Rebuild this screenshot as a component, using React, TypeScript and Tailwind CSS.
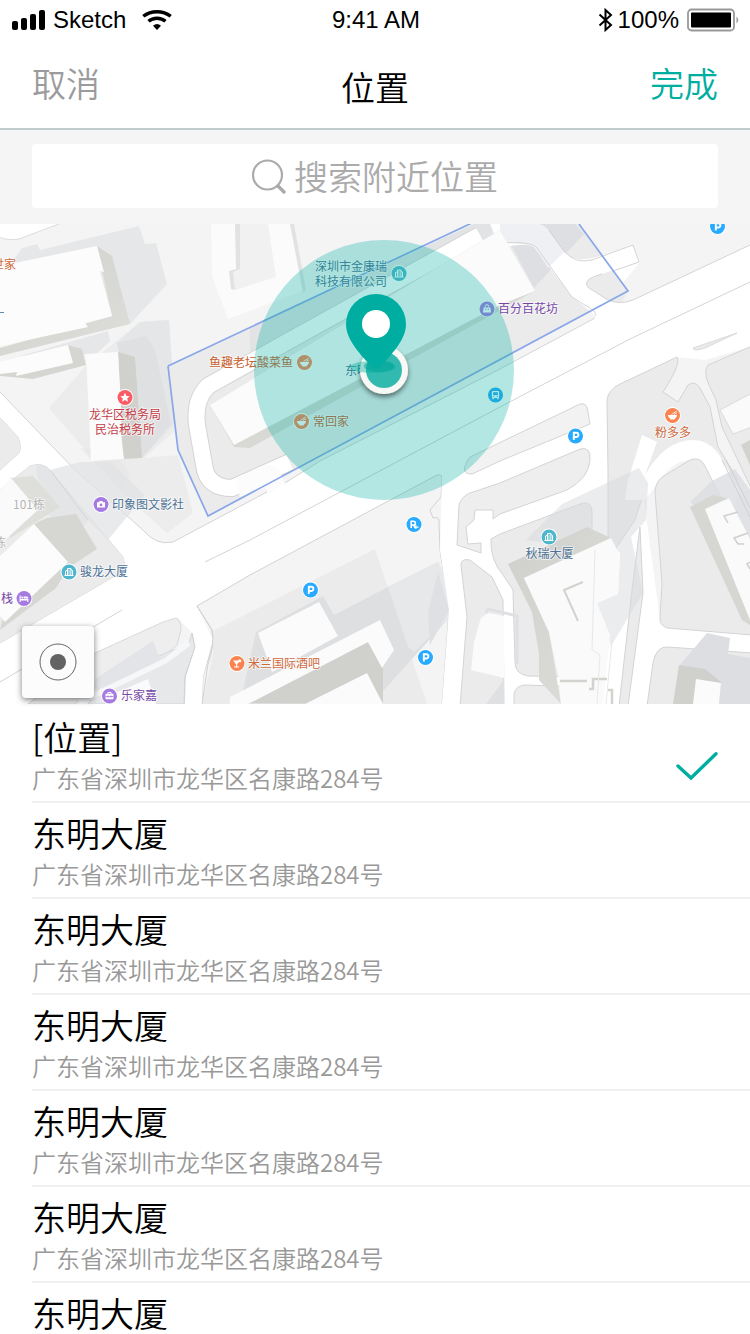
import React from "react";

type PoiKind = "building" | "food" | "bag" | "bus" | "park" | "parkExit" | "star" | "camera" | "bed" | "drink" | "gift";

const kindColor: Record<PoiKind, string> = {
  building: "#50b6cd",
  food: "#fb8350",
  bag: "#a67be0",
  bus: "#27a9f5",
  park: "#27aaff",
  parkExit: "#27aaff",
  star: "#f95c64",
  camera: "#a67be0",
  bed: "#a67be0",
  drink: "#fb8350",
  gift: "#a67be0",
};

function Glyph({ kind }: { kind: PoiKind }) {
  switch (kind) {
    case "building":
      return (
        <g fill="none" stroke="#fff" strokeWidth="1">
          <path d="M-4.5 3.5h9M-3.5 3.5V-1l2-.8M-1.5 3.5V-3.5h3.4v7M3.5 3.5V-1.5l-1.6-1" />
          <path d="M0 -2.5v5.5" strokeOpacity=".8" />
        </g>
      );
    case "food":
      return (
        <g fill="#fff">
          <path d="M-4.6 -.6h9.2a4.6 4.4 0 0 1-2.4 3.8v.8h-4.4v-.8a4.6 4.4 0 0 1-2.4-3.8z" />
          <path d="M-1 -1 4-4.4M1.4-1 4.6-2.8" stroke="#fff" strokeWidth=".9" />
        </g>
      );
    case "bag":
      return (
        <g>
          <path d="M-3.4 -1.6h6.8l.6 5.2h-8z" fill="#fff" />
          <path d="M-1.7 -1.6v-1a1.7 1.7 0 0 1 3.4 0v1" fill="none" stroke="#fff" strokeWidth="1" />
          <circle cx="-1.3" cy=".4" r=".6" fill="#a67be0" />
          <circle cx="1.3" cy=".4" r=".6" fill="#a67be0" />
        </g>
      );
    case "bus":
      return (
        <g>
          <rect x="-3.6" y="-4" width="7.2" height="7" rx="1.2" fill="#fff" />
          <rect x="-2.4" y="-2.8" width="4.8" height="3" fill="#27a9f5" />
          <path d="M-2.4 2.6v1.6M2.4 2.6v1.6" stroke="#fff" strokeWidth="1.4" />
          <circle cx="-1.9" cy="1.5" r=".6" fill="#27a9f5" />
          <circle cx="1.9" cy="1.5" r=".6" fill="#27a9f5" />
        </g>
      );
    case "park":
      return <path d="M-1.7 4V-3.2H.8a2.1 2.1 0 0 1 0 4.2H-1.7" fill="none" stroke="#fff" strokeWidth="1.9" />;
    case "parkExit":
      return (
        <g fill="none" stroke="#fff" strokeWidth="1.6">
          <path d="M-2.8 3.6V-3.2H-.5a1.8 1.8 0 0 1 0 3.7H-2.8M-.6 .6 1 2.4" />
          <path d="M.6 2.6h4M2.4 .8.6 2.6l1.8 1.6" strokeWidth="1.2" />
        </g>
      );
    case "star":
      return <path d="M0-4.8 1.4-1.6 4.8-1.3 2.2.9 3 4.3 0 2.5-3 4.3-2.2.9-4.8-1.3-1.4-1.6z" fill="#fff" />;
    case "camera":
      return (
        <g>
          <path d="M-4-2.2h2l.7-1.2h2.6l.7 1.2h2v5.2h-8z" fill="#fff" />
          <circle cy=".4" r="1.4" fill="#a67be0" />
        </g>
      );
    case "bed":
      return (
        <g fill="#fff">
          <path d="M-4.4-3h1.1v3.6h7.7v2.8H3.3V2h-6.6v1.4h-1.1z" />
          <circle cx="-1.8" cy="-1" r="1" />
          <path d="M-.4-2h3.2a1.6 1.6 0 0 1 1.6 1.6v.4H-.4z" />
        </g>
      );
    case "drink":
      return (
        <g fill="#fff">
          <path d="M-4-3h7L.2.7v2.4h1.9v1h-5v-1h1.9V.7z" />
          <circle cx="2.8" cy="-2.8" r="1.5" />
        </g>
      );
    case "gift":
      return (
        <g>
          <rect x="-4" y="-2.2" width="8" height="5.4" rx=".8" fill="#fff" />
          <path d="M-1.6-2.2v-1.3h3.2v1.3" fill="none" stroke="#fff" strokeWidth="1" />
          <path d="M-4 .5h8M-1.5-.6v2.4M1.5-.6v2.4" stroke="#a67be0" strokeWidth=".8" />
        </g>
      );
  }
}

function Poi({ x, y, kind }: { x: number; y: number; kind: PoiKind }) {
  return (
    <g transform={`translate(${x} ${y})`}>
      <circle r="8.4" fill="#fff" />
      <circle r="7.5" fill={kindColor[kind]} />
      <Glyph kind={kind} />
    </g>
  );
}

const pois: { x: number; y: number; kind: PoiKind }[] = [
  { x: 399, y: 273.5, kind: "building" },
  { x: 304.5, y: 362.5, kind: "food" },
  { x: 301.5, y: 421.5, kind: "food" },
  { x: 487, y: 309, kind: "bag" },
  { x: 495.5, y: 395, kind: "bus" },
  { x: 717.5, y: 226.5, kind: "park" },
  { x: 575.5, y: 436, kind: "park" },
  { x: 310.5, y: 590, kind: "park" },
  { x: 425.5, y: 657.5, kind: "park" },
  { x: 414, y: 524.5, kind: "parkExit" },
  { x: 125, y: 397.5, kind: "star" },
  { x: 672.5, y: 415.5, kind: "food" },
  { x: 101, y: 504.5, kind: "camera" },
  { x: 69, y: 572, kind: "building" },
  { x: 24, y: 598.5, kind: "bed" },
  { x: 549, y: 537, kind: "building" },
  { x: 237, y: 663.5, kind: "drink" },
  { x: 109.5, y: 696, kind: "gift" },
];

const labels: { x: number; y: number; text: string; color: string; anchor?: "middle" | "end" }[] = [
  { x: 16, y: 269, text: "世家", color: "#cf6a3c", anchor: "end" },
  { x: 351, y: 271, text: "深圳市金康瑞", color: "#4d7295", anchor: "middle" },
  { x: 351, y: 286, text: "科技有限公司", color: "#4d7295", anchor: "middle" },
  { x: 293, y: 367, text: "鱼趣老坛酸菜鱼", color: "#c9602f", anchor: "end" },
  { x: 313, y: 426, text: "常回家", color: "#c9602f" },
  { x: 345, y: 375, text: "东明大厦", color: "#4d7295" },
  { x: 498, y: 313, text: "百分百花坊", color: "#7747a8" },
  { x: 125, y: 419, text: "龙华区税务局", color: "#c43c48", anchor: "middle" },
  { x: 125, y: 434, text: "民治税务所", color: "#c43c48", anchor: "middle" },
  { x: 673, y: 437, text: "粉多多", color: "#cf6a3c", anchor: "middle" },
  { x: 112, y: 509, text: "印象图文影社", color: "#4d7295" },
  { x: 80, y: 576, text: "骏龙大厦", color: "#4d7295" },
  { x: 13, y: 603, text: "栈", color: "#7747a8", anchor: "end" },
  { x: 549.5, y: 558, text: "秋瑞大厦", color: "#4d7295", anchor: "middle" },
  { x: 248, y: 668, text: "米兰国际酒吧", color: "#cf6a3c" },
  { x: 121, y: 700, text: "乐家嘉", color: "#7747a8" },
  { x: 13, y: 509, text: "101栋", color: "#b5b5b5" },
  { x: 6, y: 547, text: "栋", color: "#b5b5b5", anchor: "end" },
];

function StreetMap() {
  return (
    <svg
      className="block h-full w-full"
      viewBox="0 224 750 480"
      preserveAspectRatio="xMidYMid slice"
      role="img"
      aria-label="地图"
    >
      <defs>
        <linearGradient id="wall" x1="0" y1="0" x2="1" y2="1">
          <stop offset="0" stopColor="#cfcfcb" />
          <stop offset="1" stopColor="#dededb" />
        </linearGradient>
        <filter id="pinShadow" x="-50%" y="-50%" width="200%" height="200%">
          <feDropShadow dx="0" dy="3" stdDeviation="2.5" floodColor="#000" floodOpacity=".5" />
        </filter>
      </defs>
      <rect x="0" y="224" width="750" height="480" fill="#f4f4f4" />

      {/* north-west corner road */}
      <path d="M-2 222H64L19 239Q10 241 -2 237z" fill="#fff" stroke="#d4d4d4" strokeWidth=".8" />

      {/* shadows cast by the north-west buildings */}
      <path d="M12 262 22 248 37 244 40 250 139 226 145 244 156 243 167 284 130 324 100 300z" fill="#e6e7e9" />
      <path d="M20 356 108 331 110 341 96 354z" fill="#e6e7e9" />
      <path d="M49 408 86 366 140 322 169 320 174 396 176 430 142 460 120 490z" fill="#ececec" />
      <path d="M117 343 140 322 169 320 174 396 180 398 178 420 142 458z" fill="#e5e6e7" />
      <path d="M117 343 146 336 155 350 171 424 142 458z" fill="#dfe0e1" />

      {/* walled estate */}
      <path d="M168 366 474 224H579L628 291 208 516 178 450z" fill="#ebebeb" />
      <path d="M250 328 474 224H548L480 242 250 360z" fill="#e2e3e5" />
      <path d="M500 224H575L584 234 534 288z" fill="#dedfe2" />

      {/* small street inside the estate */}
      <path d="M500 248Q525 242 534 247L572 297 596 316 640 262 632 245 600 256Q575 264 564 252L549 232Q545 224 535 224H490z" fill="#fff" />
      <path d="M500 224H535Q546 225 549 232L564 252 548 268 536 249Q532 243 500 243z" fill="#eff0f3" />
      <path d="M500 243Q532 241 537 248L572 297 583 304Q598 311 596 318M549 230 564 251Q575 264 592 260L633 245 639 262 602 275" fill="none" stroke="#d4d4d4" strokeWidth="1" />

      {/* main avenue */}
      <path
        d="M750 245 633 300Q620 305 608 300L594 318 500 369 320 461 285 483 267 492 173 542Q156 546 143 530L75 470 0 392V418L18 437Q22 446 19 453L0 470V490L30 466Q43 462 50 470L123 557Q128 569 113 577L0 643V704H30L95 653 178 618 192 633 213 640 197 606 250 575 442 475 500 445 590 453 608 400Q608 390 620 384L677 357 705 360 750 347z"
        fill="#fff"
      />
      <path d="M602 274Q580 280 589 288L608 300Q616 303 622 302L628 291 612 271z" fill="#ebebeb" />
      <path
        d="M750 245 633 300Q620 305 608 300L589 288Q580 280 602 274M595 318 500 369 320 461 285 483M267 492 173 542Q156 546 143 530L75 470 0 392M0 418 18 437Q22 446 19 453L0 470M0 490 30 466Q43 462 50 470L123 557Q128 569 113 577L0 643M750 282 630 339 500 407 250 540 205 562M122 610 0 682"
        fill="none"
        stroke="#d4d4d4"
        strokeWidth="1"
      />
      <path d="M0 418 18 437Q22 446 19 453L0 470zM0 490 30 466Q43 462 50 470L123 557Q128 569 113 577L0 643z" fill="#ebebeb" />
      <path d="M80 448 118 450 165 505 167 533 130 500z" fill="#e6e6e6" opacity=".6" />
      <path d="M120 460 178 455 193 513 167 533z" fill="#ececec" />
      <path d="M36 466Q44 462 50 470L80 462 111 462 145 495 108 540 88 520 76 535 42 510z" fill="#e2e3e6" opacity=".75" />
      <path d="M50 470 88 520" fill="none" stroke="#d4d4d4" strokeWidth="1" />
      <path d="M693 348 737 333 705 348Q694 352 693 348z" fill="#eaeaea" stroke="#d4d4d4" strokeWidth=".8" />

      {/* looping lane in the estate */}
      <g fill="none">
        <path d="M480 235 285 343 208 386Q194 400 197 425L205 470Q210 488 232 488L290 462" stroke="#d4d4d4" strokeWidth="18" />
        <path d="M480 235 285 343 208 386Q194 400 197 425L205 470Q210 488 232 488L290 462" stroke="#fff" strokeWidth="16" />
      </g>
      <path d="M235 479 250 472 267 464 278 468 285 484 268 494 266 488 240 497z" fill="#fcfcfc" />

      {/* long block in the estate */}
      <path d="M210 405 282 361 500 230 535 291 250 448 234 447z" fill="#d8d8d5" />
      <path d="M210 405 282 361 500 230 535 291 500 305 234 445z" fill="#fbfbfb" />
      <path d="M168 366 474 222M579 224 628 291 208 516 178 450 168 366" fill="none" stroke="#89a6e9" strokeWidth="1.7" />

      {/* north buildings */}
      <path d="M211 224H291L305 290 228 319 212 276z" fill="#fbfbfb" />
      <path d="M237 224H268L276 277 235 290 230 271 237 269z" fill="#f1f1f1" />
      <path d="M235 224H240V269L233 272 235 290 231 289 229 271 236 269zM290 224H294L306 290 303 293z" fill="#e1e2e4" />

      {/* north-west buildings */}
      <path d="M0 348 112 316 97 246 112 256 130 324 0 356z" fill="url(#wall)" />
      <path d="M0 266 97 246 104 272 100 271 112 316 85 323 88 327 0 346z" fill="#fcfcfc" />
      <path d="M0 372 68 345 82 349 86 365 33 379 0 376z" fill="#d5d5d2" />
      <path d="M0 362 68 345 73 363 16 376 17 372 0 374z" fill="#fcfcfc" />
      <path d="M118 352 135 357 142 458 123 459z" fill="#d0d0cd" />
      <path d="M86 354 118 352 121 405 121 436 124 459 91 461z" fill="#fbfbfb" />

      {/* west buildings */}
      <path d="M10 478 33 476 60 507 10 538z" fill="#dededb" />
      <path d="M0 490 11 478 38 510 5 540 0 534z" fill="#fafafa" />
      <path d="M34 524 47 518 76 514 97 549 68 568 56 588 0 630 10 590z" fill="#d6d6d3" />
      <path d="M0 556 34 524 68 562 5 622 0 616z" fill="#fcfcfc" />

      {/* southern blocks */}
      <path d="M197 606 250 575 437 475Q443 474 442 480L441 497 430 510 433 518Q440 516 439 523L440 550 449 610 442 706H202L203 677 213 643 212 630z" fill="#f4f4f4" stroke="#d2d2d2" strokeWidth="1" />
      <path d="M213 631 375 549 427 704H202L213 655z" fill="#ebebeb" />
      <path d="M256 632 323 596 334 615 388 587 438 562 453 595 449 618 384 690 350 704H240z" fill="#dddfe1" />
      <path d="M388 587 438 562 453 595 449 618 414 652 408 647z" fill="#e7e8ea" />
      <path d="M428 612 438 572 449 610 430 645z" fill="#dfe0e3" />
      <path d="M258 633 319 602 338 636 272 672z" fill="#fbfbfb" />
      <path d="M250 703 368 642 383 668V704z" fill="#d0d0cd" />
      <path d="M230 697 380 620 394 650 382 668 368 642 248 704H230z" fill="#fbfbfb" />
      <path d="M305 704 367 673 383 704z" fill="#fbfbfb" />

      {/* lane by the parking lot */}
      <path d="M28 704 95 653 163 622 176 618Q181 620 181 630L177 645 165 655 100 683 75 704z" fill="#eeeeee" stroke="#d2d2d2" strokeWidth=".8" />
      <path d="M88 704 104 680 168 652 188 645 192 633 195 647 185 677V704z" fill="#e7e8ea" stroke="#d2d2d2" strokeWidth=".8" />
      <path d="M95 679 153 641 162 666 94 690z" fill="#e3e4e7" />
      <path d="M78 700 165 658 188 639 190 646 167 663 95 698 80 704z" fill="#f6f7f9" />
      <path d="M113 694 148 679 156 704H110z" fill="#fbfbfb" />
      <path d="M192 630 213 638 203 677 202 704H185L186 677 195 647z" fill="#fff" />
      <path d="M197 606 212 630Q215 645 208 664L202 704M192 633 195 647 185 677 184 704" fill="none" stroke="#d2d2d2" strokeWidth="1" />

      {/* north-south street and its islands */}
      <path d="M442 475 500 445 610 400 640 470 660 620 750 630V658L660 650 647 704H442L449 610 440 550z" fill="#fff" />
      <path d="M470 457 580 404Q587 402 588 412L590 424 500 461 472 474Q458 474 470 457z" fill="#f2f2f2" stroke="#d4d4d4" strokeWidth="1" />
      <path d="M457 545 459 505Q461 497 470 493L500 483 580 449Q591 446 590 460 589 478 567 490L500 514 493 519V510H475L474 520 466 527 468 544 481 543V553z" fill="#eeeeee" stroke="#d4d4d4" strokeWidth="1" />
      <path d="M500 534 583 503Q592 502 592 512V640Q592 672 577 677L528 676Q515 674 515 662L513 590 503 575Q490 560 491 539z" fill="#ebebeb" stroke="#d4d4d4" strokeWidth="1" />
      <path d="M461 565Q461 558 470 560L492 577 503 600 504 706H460L467 617z" fill="#ebebeb" stroke="#d4d4d4" strokeWidth="1" />
      <path d="M514 706V694Q516 685 526 685L580 687Q588 690 587 706z" fill="#ededed" stroke="#d4d4d4" strokeWidth="1" />
      <path d="M608 470 607 400Q608 390 620 384L677 357 678 362Q676 372 663 392L678 402 688 385Q695 380 700 388L710 407 718 447 738 480 720 470 705 450Q694 446 690 446L668 456 648 480 635 520 608 560z" fill="#ebebeb" stroke="#d4d4d4" strokeWidth="1" />
      <path d="M628 480 642 435 657 442 645 475Q665 440 693 440 708 440 718 453L740 490 730 510 698 462Q680 455 662 477L645 500 625 500z" fill="#fff" />
      <path d="M709 385 716 400 722 427 752 490V346L708 365Q703 372 709 385z" fill="#ebebeb" stroke="#d4d4d4" strokeWidth="1" />
      <path d="M720 410 752 393V427L733 434z" fill="#fafafa" stroke="#d4d4d4" strokeWidth=".8" />
      <path d="M741 445 750 440V465z" fill="#d2d2cf" />
      <path d="M655 492Q656 480 664 476L690 460Q700 456 705 466L752 560V635L667 628Q659 625 660 617L662 584z" fill="#ebebeb" stroke="#d4d4d4" strokeWidth="1" />
      <path d="M653 663Q656 646 668 647L752 653V706H647z" fill="#ebebeb" stroke="#d4d4d4" strokeWidth="1" />
      <path d="M640 527 643 593 628 706H619L632 590z" fill="#ebebeb" stroke="#d4d4d4" strokeWidth="1" />

      {/* south-east shadows */}
      <path d="M526 540 562 504 639 468 648 483 646 520 631 537 643 593 611 646 597 603 618 594 620 552z" fill="#d8d9de" opacity=".5" />
      <path d="M690 502 712 481 735 469 750 490V545z" fill="#dcdde1" opacity=".8" />
      <path d="M680 665 707 633 730 638 728 654 750 658V704H690z" fill="#dcdee1" />
      <path d="M486 704 504 680V704z" fill="#dfe0e2" />
      <path d="M471 670 474 642 481 618 488 613 504 616V678z" fill="#fbfbfb" />
      <path d="M486 613 488 609 517 616V664" fill="none" stroke="#dfe0e3" strokeWidth="3" />

      {/* tower in the south east */}
      <path d="M508 564 587 527 611 538 524 578 549 632 561 704 539 680V654L532 612z" fill="url(#wall)" />
      <path d="M524 578 611 538 620 555 618 594 597 603 610 635 603 704H561L558 675 549 632z" fill="#fafafa" />
      <path d="M578 621 564 590 583 582" fill="none" stroke="#d2d2cf" strokeWidth="2" />
      <path d="M560 681H587M589 689H593V679H607M608 690H612V704" fill="none" stroke="#d2d2cf" strokeWidth="2.5" />
      <path d="M595 550 592 650 600 655 597 704M612 640 606 704" fill="none" stroke="#e8e8e8" strokeWidth="1" />

      {/* slanted building on the east edge */}
      <path d="M690 507 713 495 730 499 750 600V625L742 620z" fill="#d6d6d3" />
      <path d="M705 509 729 498 750 539V620z" fill="#fafafa" />
      <path d="M738 512 724 516 728 523M748 533 734 538 738 544H744M750 562 747 564 750 569" fill="none" stroke="#cfcfcc" strokeWidth="1.5" />
      <path d="M722 460 750 517M726 460 750 508" fill="none" stroke="#d0d0d0" strokeWidth="1" />
      <path d="M679 665 705 669 721 682 719 704H673z" fill="#d0d0cd" />
      <path d="M696 679 721 683 719 704H693z" fill="#fbfbfb" />
      <path d="M0 312.500H4" stroke="#5b8db5" strokeWidth="1" />

      {/* place names */}
      <g
        fontFamily="'Noto Sans CJK SC', sans-serif"
        fontSize="12"
        fontWeight="400"
        stroke="#fff"
        strokeWidth="2"
        strokeLinejoin="round"
        strokeOpacity=".6"
        paintOrder="stroke"
      >
        {labels.map((l) => (
          <text key={l.text + l.y} x={l.x} y={l.y} fill={l.color} textAnchor={l.anchor}>
            {l.text}
          </text>
        ))}
      </g>
      {pois.map((p) => (
        <Poi key={`${p.x}-${p.y}`} {...p} />
      ))}

      {/* search radius, current position and pin */}
      <circle cx="384" cy="370" r="130" fill="#00aea1" fillOpacity=".3" />
      <circle cx="384" cy="370" r="24" fill="#f8f8f4" filter="url(#pinShadow)" />
      <circle cx="384" cy="370" r="18" fill="#33bab0" />
      <ellipse cx="373" cy="367" rx="23" ry="6" fill="#00aea1" fillOpacity=".4" />
      <ellipse cx="379" cy="366" rx="15" ry="6" fill="#00a497" fillOpacity=".5" />
      <path d="M376 294A30 30 0 0 1 406 324C406 340 391 355 380 367Q376 371 372 367C361 355 346 340 346 324A30 30 0 0 1 376 294z" fill="#00aea1" />
      <circle cx="376" cy="324" r="14" fill="#fff" />
    </svg>
  );
}

function StatusBar() {
  return (
    <div className="grid h-10 grid-cols-3 items-center pr-2.5 pl-3 font-['Liberation_Sans',sans-serif] text-2xl leading-none font-normal">
      <div className="flex items-center">
        <svg className="h-5 w-[33px]" viewBox="0 0 33 20" aria-hidden="true">
          <rect x="0" y="11" width="6" height="9" rx="2" />
          <rect x="9" y="8" width="6" height="12" rx="2" />
          <rect x="18" y="4" width="6" height="16" rx="2" />
          <rect x="27" y="0" width="6" height="20" rx="2" />
        </svg>
        <span className="ml-2">Sketch</span>
        <svg className="ml-4 h-5 w-[30px]" viewBox="0 0 30 20" fill="none" stroke="#000" aria-hidden="true">
          <path d="M1.300 6.300Q7 1.700 15 1.700T28.700 6.300" strokeWidth="3.400" />
          <path d="M6.500 11.300Q10 8.200 15 8.200T23.500 11.300" strokeWidth="3.400" />
          <path d="M11 15.700Q15 12.300 19 15.700L15 20z" fill="#000" stroke="none" />
        </svg>
      </div>
      <span className="text-center">9:41 AM</span>
      <div className="flex items-center justify-end">
        <svg className="h-6 w-4" viewBox="0 0 16 24" fill="none" stroke="#000" strokeWidth="2" aria-hidden="true">
          <path d="M1.500 6.500 13 17 7.500 22V2L13 7 1.500 17.500" />
        </svg>
        <span className="ml-1">100%</span>
        <svg className="ml-2 h-6 w-[53px]" viewBox="0 0 53 24" aria-hidden="true">
          <rect x="1" y="1.500" width="46" height="21" rx="3.500" fill="none" stroke="#999" strokeWidth="1.800" />
          <rect x="4" y="4.500" width="40" height="15" rx="1" />
          <path d="M49.500 8.500Q53 12 49.500 15.500z" fill="#999" />
        </svg>
      </div>
    </div>
  );
}

const address = "广东省深圳市龙华区名康路284号";
const places = ["[位置]", "东明大厦", "东明大厦", "东明大厦", "东明大厦", "东明大厦", "东明大厦"];

export default function App() {
  const [selected, setSelected] = React.useState(0);
  return (
    <div className="flex h-screen flex-col overflow-hidden bg-white font-['Noto_Sans_CJK_SC',sans-serif] font-[350] text-black">
      <header className="shrink-0 border-b-2 border-[#bfcccc]">
        <StatusBar />
        <div className="grid h-[88px] grid-cols-3 items-start px-8 pt-[23px] text-[34px]">
          <button type="button" className="justify-self-start leading-10 text-[#9b9b9d]">
            取消
          </button>
          <h1 className="text-center font-[350] leading-[48px]">位置</h1>
          <button type="button" className="justify-self-end leading-10 text-[#00aea1]">
            完成
          </button>
        </div>
      </header>

      <div className="shrink-0 bg-[#f5f5f5] px-8 pt-3.5 pb-4">
        <label className="flex h-16 items-center justify-center gap-2 rounded bg-white">
          <svg className="h-9 w-9" viewBox="0 0 36 36" fill="none" stroke="#ababab" aria-hidden="true">
            <circle cx="17.500" cy="17" r="14.500" strokeWidth="2.200" />
            <path d="M28 28l6 6" strokeWidth="3.400" strokeLinecap="round" />
          </svg>
          <input
            type="text"
            aria-label="搜索附近位置"
            placeholder="搜索附近位置"
            className="h-14 w-[206px] bg-transparent pb-0.5 text-[34px] outline-none placeholder:text-[#ababab]"
          />
        </label>
      </div>

      <section className="relative h-[480px] shrink-0">
        <StreetMap />
        <button
          type="button"
          aria-label="定位"
          className="absolute bottom-1.5 left-[22px] flex h-[72px] w-[72px] items-center justify-center rounded bg-[#fcfcfc] shadow-[0_2px_6px_rgba(0,0,0,0.5)]"
        >
          <svg className="h-10 w-10" viewBox="0 0 40 40" aria-hidden="true">
            <circle cx="20" cy="20" r="18" fill="none" stroke="#666" strokeWidth="1" />
            <circle cx="20" cy="20" r="8" fill="#636363" />
          </svg>
        </button>
      </section>

      <ul className="min-h-0 flex-1 overflow-y-auto pt-[3px] pl-8 [scrollbar-width:none]">
        {places.map((name, i) => (
          <li key={i} className="border-b-2 border-[#f1f1f1]">
            <button
              type="button"
              onClick={() => setSelected(i)}
              className="flex w-full items-center justify-between pt-2.5 pr-8 pb-[7px] text-left"
            >
              <span className="flex flex-col gap-[5px]">
                <span className="text-[34px] leading-10">{name}</span>
                <span className="text-2xl leading-8 text-[#999999]">{address}</span>
              </span>
              {selected === i && (
                <svg className="mt-5 h-7 w-[42px]" viewBox="0 0 42 28" fill="none" aria-label="已选择">
                  <path d="M2 14 15 26 40 1.800" stroke="#00aea1" strokeWidth="3.400" strokeLinecap="round" />
                </svg>
              )}
            </button>
          </li>
        ))}
      </ul>
    </div>
  );
}
